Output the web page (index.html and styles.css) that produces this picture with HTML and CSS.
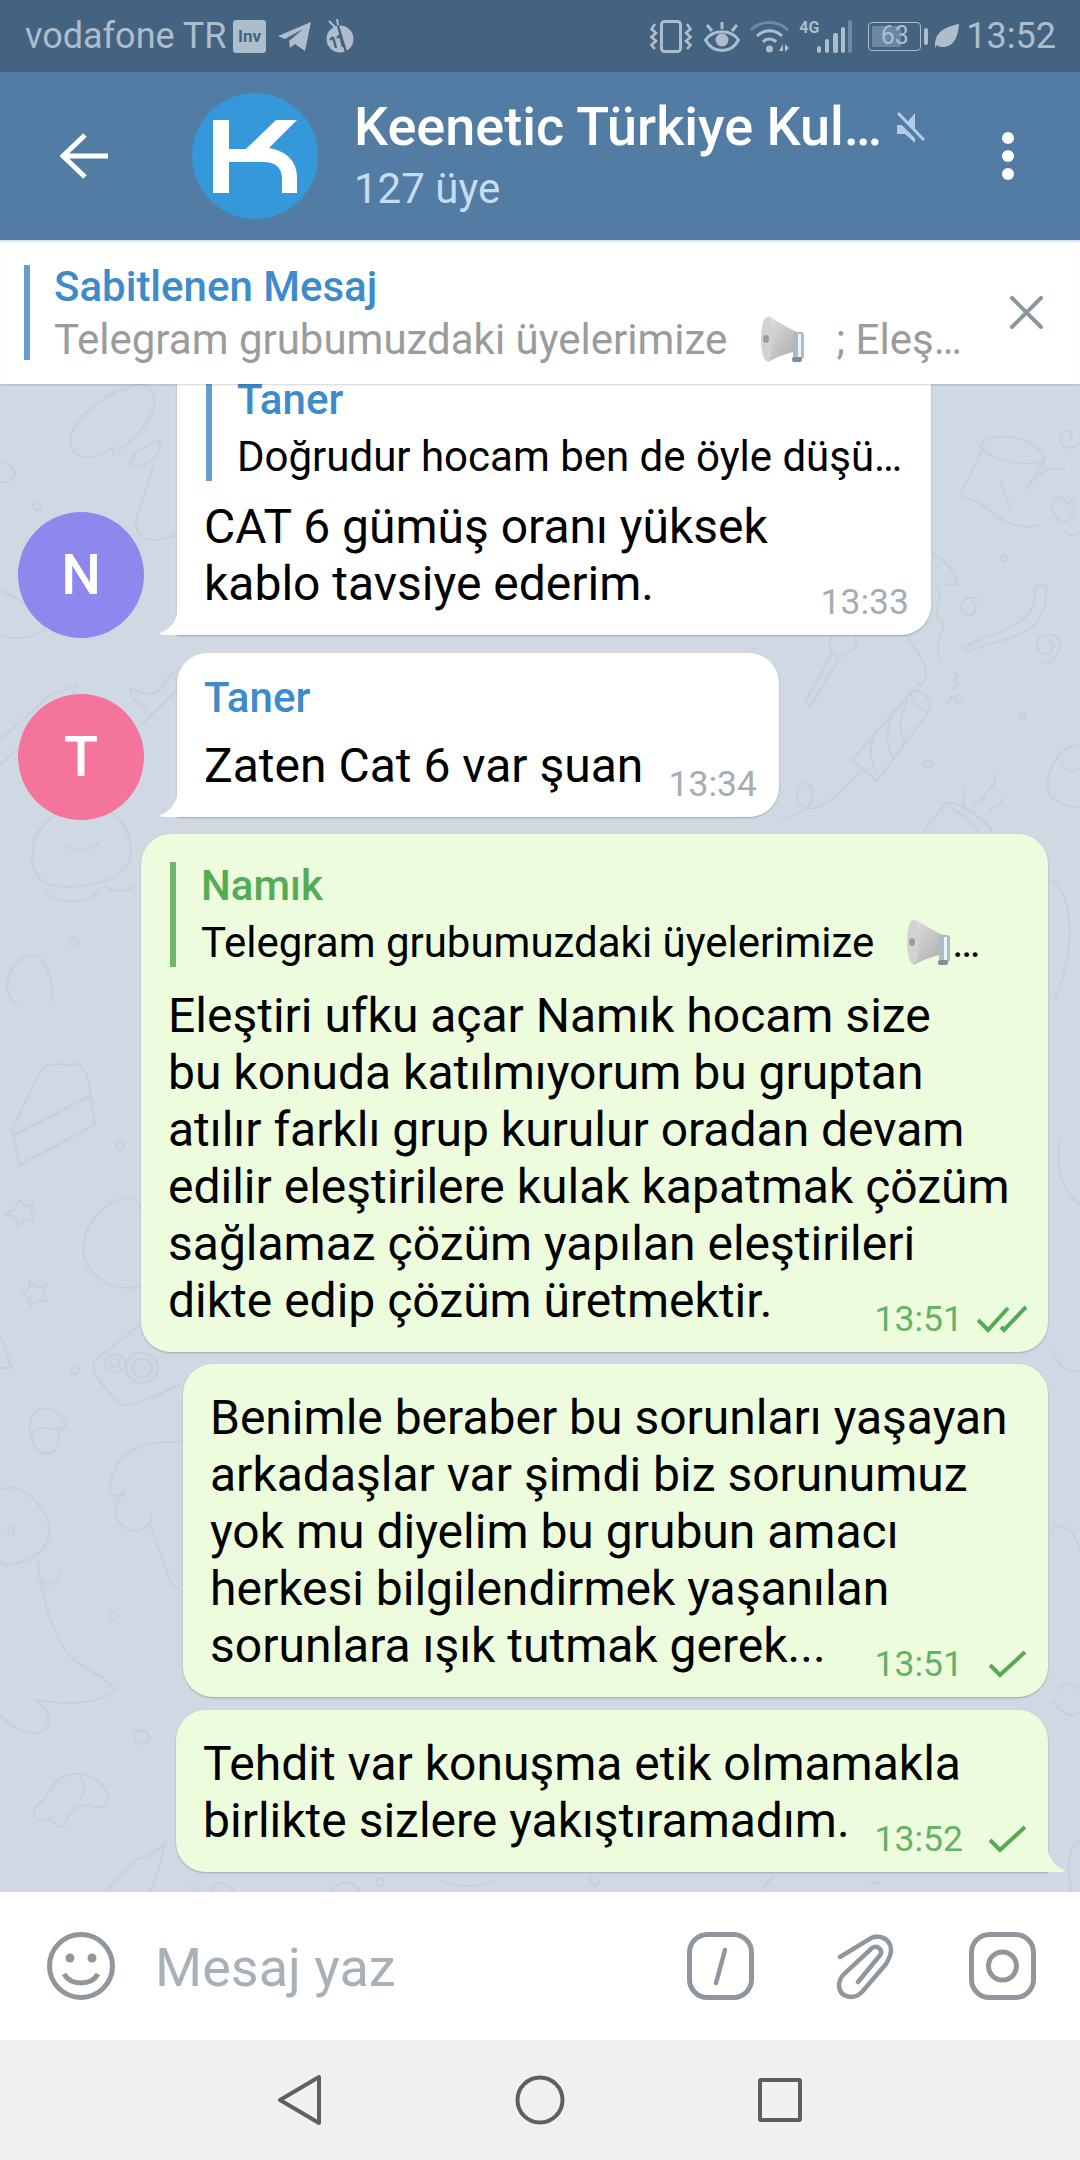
FILE: index.html
```html
<!DOCTYPE html>
<html lang="tr">
<head>
    <meta charset="UTF-8">
    <meta name="viewport" content="width=device-width, initial-scale=1.0">
    <title>Keenetic Türkiye Kulübü</title>
    <link rel="stylesheet" href="styles.css">
</head>
<body>
    <svg class="defs" width="0" height="0">
        <defs>
            <linearGradient id="horn" x1="0" y1="0" x2="1" y2="1">
                <stop offset="0" stop-color="#e4e4e4"/>
                <stop offset="1" stop-color="#a9a9a9"/>
            </linearGradient>
            <symbol id="megaphone" viewBox="0 0 46 48">
                <path d="M9 1C18 7 30 14 39 18L38 36C28 38 16 42 8 47C2 42 0 10 9 1Z" fill="url(#horn)"/>
                <ellipse cx="7" cy="24" rx="6" ry="22" fill="#d2d2d2"/>
                <ellipse cx="6" cy="24" rx="3" ry="4" fill="#9a9a9a"/>
                <rect x="33" y="17" width="11" height="27" rx="3" fill="#a9bccb"/>
                <rect x="38" y="19" width="3" height="23" fill="#eef3f6"/>
                <rect x="32" y="42" width="10" height="5" rx="2" fill="#7f8f9c"/>
            </symbol>
        </defs>
    </svg>

    <div class="statusbar">
        <span class="carrier">vodafone TR</span>
        <span class="inv-badge">Inv</span>
        <svg class="st-plane" viewBox="0 0 33 29"><path d="M33 0L27 29L17 22L12 26L11 19L25 7L7 17L0 14Z" fill="#adbdcb"/></svg>
        <svg class="st-bug" viewBox="0 0 28 34">
            <circle cx="14" cy="20" r="13.5" fill="#adbdcb"/>
            <path d="M9 8L3 2M12 6L11 0" stroke="#adbdcb" stroke-width="2" fill="none"/>
            <path d="M12 7L20 33M7 18L10 29M14 16L17 28M7 18L4 21M14 16L11 19" stroke="#446380" stroke-width="2.4" fill="none"/>
        </svg>
        <div class="st-right">
            <svg class="st-vibrate" viewBox="0 0 42 33" fill="none" stroke="#adbdcb" stroke-width="3">
                <rect x="11.500" y="1.500" width="19" height="30" rx="3"/>
                <path d="M5 4L1.500 9L6 13L1.500 17L6 21L1.500 25L5 29M37 4L40.500 9L36 13L40.500 17L36 21L40.500 25L37 29" stroke-width="2.600"/>
            </svg>
            <svg class="st-eye" viewBox="0 0 36 31" fill="none" stroke="#adbdcb" stroke-width="3">
                <path d="M1.500 19C9 8 27 8 34.500 19C27 33 9 33 1.500 19Z"/>
                <circle cx="18" cy="19" r="6.500" fill="#adbdcb" stroke="none"/>
                <path d="M18 1V8M3 4L8 10M33 4L28 10"/>
            </svg>
            <svg class="st-wifi" viewBox="0 0 39 33" fill="none" stroke-width="3">
                <path d="M1 10C11 0 28 0 38 10" stroke="#6f8aa2"/>
                <path d="M7 16C14 9 25 9 32 16M13 22C16 18 23 18 26 22" stroke="#adbdcb"/>
                <circle cx="19.500" cy="29" r="3.500" fill="#adbdcb"/>
                <path d="M29 31L33 24V31ZM35 24L39 28L35 32Z" fill="#adbdcb"/>
            </svg>
            <div class="st-signal">
                <span class="st-4g">4G</span>
                <svg viewBox="0 0 35 33">
                    <rect x="0" y="26" width="4" height="7" rx="2" fill="#adbdcb"/>
                    <rect x="8" y="19" width="4" height="14" rx="2" fill="#adbdcb"/>
                    <rect x="16" y="13" width="5" height="20" rx="2" fill="#adbdcb"/>
                    <rect x="24" y="7" width="4" height="26" rx="2" fill="#adbdcb"/>
                    <rect x="31" y="0" width="4" height="33" rx="2" fill="#6f8aa2"/>
                </svg>
            </div>
            <div class="st-battery">
                <div class="st-battery-body"><span class="st-battery-fill"></span><span class="st-battery-num">63</span></div>
                <span class="st-battery-nub"></span>
            </div>
            <svg class="st-leaf" viewBox="0 0 24 24"><path d="M24 0C23 14 18 24 6 23C5 23 3 22 2 21L0 24L0 21C0 8 10 3 24 0Z" fill="#adbdcb"/></svg>
            <span class="st-time">13:52</span>
        </div>
    </div>

    <header class="topbar">
        <svg class="back" viewBox="0 0 48 46" fill="none" stroke="#fff" stroke-width="5">
            <path d="M48 23H3M25 2L3 23L25 44"/>
        </svg>
        <div class="group-avatar">
            <svg viewBox="0 0 84 73"><path d="M0 0H16V29H33L63 0H84L56 28C74 31 84 42 84 57V73H69V59C69 47 62 42 50 42H16V73H0Z" fill="#fff"/></svg>
        </div>
        <div class="group-info">
            <div class="group-name">Keenetic Türkiye Kul…</div>
            <div class="group-members">127 üye</div>
        </div>
        <svg class="mute" viewBox="0 0 28 32">
            <path d="M0 13H8L18 1V31L8 22H0Z" fill="#b2cde5"/>
            <path d="M0 4L26 30" stroke="#527ca3" stroke-width="6"/>
            <path d="M1 1L27 28" stroke="#b2cde5" stroke-width="3"/>
        </svg>
        <div class="dots"><span></span><span></span><span></span></div>
    </header>

    <div class="pinned">
        <div class="pinned-text">
            <div class="pinned-title">Sabitlenen Mesaj</div>
            <div class="pinned-msg">Telegram grubumuzdaki üyelerimize<svg class="emoji pin-emoji"><use href="#megaphone"/></svg>; Eleş…</div>
        </div>
        <svg class="pinned-close" viewBox="0 0 33 33" stroke="#8a979e" stroke-width="4" stroke-linecap="round">
            <path d="M2 2L31 31M31 2L2 31"/>
        </svg>
    </div>

    <main class="chat">
        <svg class="doodles" viewBox="0 384 1080 1508" fill="none" stroke="#c6d0db" stroke-width="2">
            <!-- sol kolon -->
            <path d="M70 440C75 415 110 390 140 384C158 385 158 410 145 425C135 440 118 450 113 456L113 447C100 458 80 462 72 450Z"/>
            <path d="M0 462C10 462 16 470 14 476C10 483 5 482 0 482"/>
            <path d="M130 462C135 450 150 443 160 440C162 455 145 470 130 465ZM153 467L136 520C135 540 150 545 176 535"/>
            <circle cx="37" cy="506" r="4"/>
            <path d="M0 590C20 600 45 615 45 630C30 640 10 640 0 635"/>
            <path d="M0 740L50 695L77 685L70 700L0 765"/>
            <path d="M130 688C145 695 155 695 160 690C165 680 170 675 177 670M130 688C128 700 145 705 148 712M140 726L177 690"/>
            <path d="M33 850C35 825 60 805 85 805C115 805 135 830 130 860C120 885 75 890 50 885C35 880 30 865 33 850Z"/>
            <path d="M65 845C72 852 88 852 100 842M45 890C50 905 90 905 100 890M105 885C115 895 130 890 135 885"/>
            <circle cx="74" cy="942" r="4"/>
            <path d="M7 985C10 960 30 950 40 958C50 970 55 985 50 1004M7 985C8 995 12 1004 18 1004"/>
            <path d="M12 1130L40 1072C50 1060 60 1065 70 1065C80 1060 88 1070 90 1092L95 1125L20 1165ZM14 1135L92 1095"/>
            <circle cx="120" cy="1145" r="4"/>
            <path d="M20 1200L26 1207L33 1204L31 1213L34 1220L25 1219L18 1226L16 1217L5 1214L14 1209Z"/>
            <path d="M30 1281L37 1288L47 1284L43 1293L47 1301L37 1300L31 1306L28 1297L22 1293L29 1289Z"/>
            <path d="M83 1250C83 1225 105 1198 130 1198C138 1200 141 1205 140 1210M83 1250C85 1275 110 1292 140 1287"/>
            <path d="M95 1360C90 1368 97 1378 103 1385L118 1403C125 1408 135 1405 180 1385M95 1360L140 1325"/>
            <ellipse cx="142" cy="1368" rx="16" ry="15"/><ellipse cx="142" cy="1368" rx="10" ry="9"/>
            <ellipse cx="115" cy="1363" rx="10" ry="9"/><ellipse cx="115" cy="1363" rx="5" ry="4"/>
            <circle cx="75" cy="1370" r="4"/>
            <path d="M0 1336C5 1345 8 1360 12 1368H0"/>
            <path d="M30 1435C25 1410 50 1395 66 1425C62 1432 50 1428 45 1428C35 1428 30 1432 30 1435Z"/>
            <path d="M32 1432C30 1450 42 1456 52 1453C60 1448 60 1438 58 1428"/>
            <path d="M0 1490C15 1480 45 1500 50 1530C48 1550 35 1560 10 1565C0 1565 0 1560 0 1560"/>
            <path d="M38 1560C42 1610 60 1650 75 1660C85 1670 105 1675 115 1690C100 1705 65 1705 35 1700C50 1710 55 1725 40 1733C20 1735 10 1725 0 1715"/>
            <path d="M40 1580C50 1590 60 1580 60 1570"/>
            <ellipse cx="11" cy="1530" rx="3" ry="5"/>
            <path d="M115 1470C120 1450 150 1440 180 1442M115 1470C105 1490 110 1500 125 1495M125 1490C105 1510 120 1535 140 1530C150 1525 155 1520 150 1515M150 1525L172 1585L180 1590"/>
            <circle cx="113" cy="1616" r="4"/>
            <circle cx="142" cy="1737" r="7"/>
            <path d="M50 1790C60 1770 95 1765 108 1795C108 1808 100 1810 88 1805C75 1805 68 1815 65 1825C60 1830 55 1825 50 1818C40 1825 30 1818 35 1808C40 1802 45 1800 50 1790Z"/>
            <path d="M80 1775C85 1785 85 1795 80 1800"/>
            <path d="M105 1892L135 1860L150 1855L165 1843L160 1865L155 1880L150 1892"/>
            <!-- sag kolon -->
            <path d="M980 445C990 430 1035 435 1045 458C1040 468 990 465 980 445Z"/>
            <path d="M982 450L970 475C962 490 960 493 962 497C975 500 985 505 995 515C1010 525 1025 530 1040 525"/>
            <path d="M1045 460L1025 490C1040 470 1050 465 1065 470M1000 480C1005 495 1010 505 1010 510"/>
            <path d="M1052 505C1058 490 1065 500 1068 505C1072 495 1078 500 1072 515C1068 525 1055 525 1052 505Z"/>
            <path d="M1065 530C1070 540 1080 535 1080 530"/>
            <circle cx="1004" cy="558" r="3"/>
            <path d="M1068 441C1074 436 1072 430 1066 431C1060 432 1058 440 1063 446C1070 450 1076 447 1080 442"/>
            <path d="M970 602C976 602 978 610 973 614C966 617 960 610 962 604C966 596 975 596 980 602"/>
            <path d="M1048 640C1054 642 1054 652 1048 654C1040 656 1035 648 1038 640C1042 632 1055 632 1060 642C1062 655 1050 665 1040 662"/>
            <path d="M1035 586C1040 625 1000 630 963 647L968 652C1005 635 1050 640 1046 585Z"/>
            <path d="M937 586C945 600 930 610 941 620C950 630 930 640 941 660"/>
            <path d="M931 553C945 560 955 570 958 585L945 584"/>
            <path d="M832 654L805 702L811 706L838 660M832 654C825 640 835 630 845 632C858 632 860 645 852 650C845 655 838 660 832 654Z"/>
            <path d="M907 637C915 650 930 665 925 680C920 690 915 680 915 680"/>
            <path d="M913 690C925 690 932 702 930 710C925 715 905 700 913 690Z"/>
            <path d="M913 690L852 760L877 781L930 710M897 708C885 725 885 745 893 758M882 725C868 740 868 755 876 772M908 700C900 715 898 730 905 742"/>
            <path d="M860 770C840 800 800 825 797 795C800 775 815 780 812 800C805 815 790 815 780 820"/>
            <path d="M953 672C960 675 958 680 953 680C960 683 958 690 952 688M945 705L953 696"/>
            <circle cx="959" cy="699" r="4"/><circle cx="1023" cy="717" r="3"/><circle cx="928" cy="764" r="4"/>
            <path d="M1080 745C1060 745 1045 770 1048 790C1050 800 1060 805 1080 808M1062 765C1068 775 1075 772 1080 768"/>
            <path d="M963 787C968 795 960 800 965 808M993 774C1000 785 985 790 985 795C982 802 978 802 973 804M1003 797C998 810 992 805 987 814"/>
            <path d="M923 832L947 802C965 805 985 820 993 832M950 808C965 815 975 825 978 832"/>
            <path d="M1052 880C1075 900 1075 950 1055 1000M1060 1140C1055 1170 1062 1190 1080 1205"/>
            <path d="M1052 1350C1062 1372 1070 1375 1080 1370M1052 1530C1060 1520 1075 1530 1080 1550"/>
            <path d="M1052 1700C1060 1712 1072 1720 1080 1712M1058 1690C1066 1680 1074 1684 1080 1690"/>
            <path d="M1080 1840C1068 1845 1066 1870 1072 1892"/>
            <!-- alt -->
            <path d="M210 1892C215 1880 225 1880 235 1892M190 1885L200 1892M330 1892C340 1880 352 1878 360 1892"/>
            <circle cx="380" cy="1882" r="4"/>
            <path d="M440 1880C455 1888 480 1888 495 1880M590 1876C590 1888 600 1890 600 1876M760 1890L775 1875M870 1880C875 1885 880 1885 880 1878"/>
        </svg>

        <div class="row">
            <div class="avatar avatar-n">N</div>
            <div class="bubble in bubble-cat">
                <div class="reply">
                    <div class="reply-name">Taner</div>
                    <div class="reply-text">Doğrudur hocam ben de öyle düşü…</div>
                </div>
                <div class="text">CAT 6 gümüş oranı yüksek<br>kablo tavsiye ederim.</div>
                <div class="meta">13:33</div>
            </div>
        </div>

        <div class="row row-taner">
            <div class="avatar avatar-t">T</div>
            <div class="bubble in bubble-zaten">
                <div class="sender">Taner</div>
                <div class="text">Zaten Cat 6 var şuan</div>
                <div class="meta">13:34</div>
            </div>
        </div>

        <div class="bubble out bubble-elestiri">
            <div class="reply">
                <div class="reply-name">Namık</div>
                <div class="reply-text">Telegram grubumuzdaki üyelerimize<svg class="emoji reply-emoji"><use href="#megaphone"/></svg>…</div>
            </div>
            <div class="text">Eleştiri ufku açar Namık hocam size<br>bu konuda katılmıyorum bu gruptan<br>atılır farklı grup kurulur oradan devam<br>edilir eleştirilere kulak kapatmak çözüm<br>sağlamaz çözüm yapılan eleştirileri<br>dikte edip çözüm üretmektir.</div>
            <div class="meta">13:51
                <svg class="tick" viewBox="0 0 50 28" fill="none" stroke="#56a957" stroke-width="4"><path d="M1 15L11 25L31 3M24 22L27 25L49 2"/></svg>
            </div>
        </div>

        <div class="bubble out bubble-benimle">
            <div class="text">Benimle beraber bu sorunları yaşayan<br>arkadaşlar var şimdi biz sorunumuz<br>yok mu diyelim bu grubun amacı<br>herkesi bilgilendirmek yaşanılan<br>sorunlara ışık tutmak gerek...</div>
            <div class="meta">13:51
                <svg class="tick" viewBox="0 0 50 28" fill="none" stroke="#56a957" stroke-width="4"><path d="M13 15L23 25L48 2"/></svg>
            </div>
        </div>

        <div class="bubble out tail bubble-tehdit">
            <div class="text">Tehdit var konuşma etik olmamakla<br>birlikte sizlere yakıştıramadım.</div>
            <div class="meta">13:52
                <svg class="tick" viewBox="0 0 50 28" fill="none" stroke="#56a957" stroke-width="4"><path d="M13 15L23 25L48 2"/></svg>
            </div>
        </div>
    </main>

    <div class="composer">
        <svg class="ic-smile" viewBox="0 0 68 70" fill="none" stroke="#8f979c" stroke-width="5">
            <circle cx="34" cy="35" r="31.500"/>
            <circle cx="23" cy="27" r="4.500" fill="#8f979c" stroke="none"/>
            <circle cx="45" cy="27" r="4.500" fill="#8f979c" stroke="none"/>
            <path d="M17 43C24 55 44 55 51 43" stroke-width="5"/>
        </svg>
        <div class="placeholder">Mesaj yaz</div>
        <svg class="ic-box" viewBox="0 0 67 68" fill="none" stroke="#8f979c" stroke-width="5">
            <rect x="2.500" y="2.500" width="62" height="63" rx="18"/>
            <path d="M38 18L29 51" stroke-width="4.500" stroke-linecap="round"/>
        </svg>
        <svg class="ic-clip" viewBox="0 0 58 68" fill="none" stroke="#8f979c" stroke-width="4.500" stroke-linecap="round">
            <path d="M4 25L32 8C42 0 55 7 55 18C55 24 52 28 50 32L26 60C18 68 4 66 3 54C3 49 5 45 8 42L36 16C40 13 46 16 45 22L22 50"/>
        </svg>
        <svg class="ic-box ic-cam" viewBox="0 0 67 68" fill="none" stroke="#8f979c" stroke-width="5">
            <rect x="2.500" y="2.500" width="62" height="63" rx="18"/>
            <circle cx="33.500" cy="34" r="14"/>
        </svg>
    </div>

    <nav class="navbar">
        <svg viewBox="0 0 44 50" class="nav-back" fill="none" stroke="#5f5f5f" stroke-width="4" stroke-linejoin="round"><path d="M41 2V48L2 25Z"/></svg>
        <svg viewBox="0 0 50 50" class="nav-home" fill="none" stroke="#5f5f5f" stroke-width="4"><circle cx="25" cy="25" r="22.500"/></svg>
        <svg viewBox="0 0 44 44" class="nav-recent" fill="none" stroke="#5f5f5f" stroke-width="4" stroke-linejoin="round"><rect x="2" y="2" width="40" height="40" rx="1"/></svg>
    </nav>
</body>
</html>
```

FILE: styles.css
```css
:root {
    --status: #446380;
    --header: #527ca3;
    --status-ic: #adbdcb;
    --blue: #3e8bcc;
    --blue-bar: #659fd2;
    --green: #55ac57;
    --green-bar: #6fb56f;
    --green-bg: #ecfcdc;
    --chat-bg: #d0d9e3;
    --meta-grey: #a4adb4;
}
* {
    box-sizing: border-box;
}
body {
    margin: 0;
    width: 1080px;
    height: 2160px;
    overflow: hidden;
    font-family: Roboto, "Noto Sans", sans-serif;
    display: flex;
    flex-direction: column;
}
.defs {
    position: absolute;
}

/* status bar */
.statusbar {
    height: 72px;
    flex: none;
    background: var(--status);
    display: flex;
    align-items: center;
    padding: 0 24px 0 25px;
    color: var(--status-ic);
}
.carrier {
    font-size: 36px;
    width: 208px;
    white-space: nowrap;
}
.inv-badge {
    width: 33px;
    height: 33px;
    border-radius: 3px;
    background: var(--status-ic);
    color: var(--status);
    font-size: 17px;
    font-weight: 700;
    text-align: center;
    line-height: 33px;
}
.st-plane {
    width: 33px;
    height: 29px;
    margin-left: 12px;
}
.st-bug {
    width: 28px;
    height: 34px;
    margin-left: 15px;
}
.st-right {
    margin-left: auto;
    display: flex;
    align-items: center;
}
.st-vibrate {
    width: 42px;
    height: 33px;
}
.st-eye {
    width: 36px;
    height: 31px;
    margin-left: 12px;
}
.st-wifi {
    width: 39px;
    height: 33px;
    margin-left: 10px;
}
.st-signal {
    display: flex;
    width: 53px;
    height: 33px;
    margin-left: 10px;
}
.st-4g {
    width: 18px;
    font-size: 16px;
    font-weight: 700;
    line-height: 15px;
}
.st-signal svg {
    width: 35px;
    height: 33px;
}
.st-battery {
    display: flex;
    align-items: center;
    margin-left: 16px;
}
.st-battery-body {
    position: relative;
    width: 53px;
    height: 29px;
    border: 1.5px solid var(--status-ic);
    border-radius: 4px;
    padding: 3px;
}
.st-battery-fill {
    display: block;
    width: 63%;
    height: 100%;
    background: #6b87a1;
    border-radius: 1px;
}
.st-battery-num {
    position: absolute;
    left: 0;
    right: 0;
    top: 0;
    text-align: center;
    font-size: 25px;
    line-height: 26px;
}
.st-battery-nub {
    width: 4px;
    height: 17px;
    margin-left: 3px;
    background: var(--status-ic);
    border-radius: 2px;
}
.st-leaf {
    width: 24px;
    height: 24px;
    margin-left: 7px;
}
.st-time {
    font-size: 36px;
    margin-left: 7px;
}

/* header */
.topbar {
    height: 168px;
    flex: none;
    background: var(--header);
    display: flex;
    align-items: center;
    padding-left: 60px;
    position: relative;
}
.back {
    width: 48px;
    height: 46px;
    flex: none;
}
.group-avatar {
    width: 126px;
    height: 126px;
    margin-left: 84px;
    border-radius: 50%;
    background: #3498db;
    display: flex;
    align-items: center;
    justify-content: center;
    flex: none;
}
.group-avatar svg {
    width: 84px;
    height: 73px;
}
.group-info {
    margin-left: 36px;
    width: 543px;
}
.group-name {
    font-size: 54px;
    font-weight: 500;
    line-height: 66px;
    color: #fff;
    white-space: nowrap;
}
.group-members {
    font-size: 42px;
    line-height: 58px;
    color: #c6dcf0;
}
.mute {
    width: 28px;
    height: 32px;
    margin-bottom: 56px;
    flex: none;
}
.dots {
    margin-left: 77px;
    display: flex;
    flex-direction: column;
    gap: 6px;
}
.dots span {
    width: 12px;
    height: 12px;
    border-radius: 50%;
    background: #fff;
}

/* sabitlenen mesaj */
.pinned {
    height: 144px;
    flex: none;
    background: #fff;
    display: flex;
    align-items: center;
    padding-left: 24px;
    position: relative;
    z-index: 2;
    box-shadow: 0 1px 2px rgba(0, 0, 0, 0.18), inset 0 3px 3px -2px rgba(82, 124, 163, 0.35);
}
.pinned-text {
    border-left: 6px solid var(--blue-bar);
    padding-left: 24px;
    height: 95px;
    width: 986px;
}
.pinned-title {
    font-size: 42px;
    font-weight: 500;
    line-height: 50px;
    margin-top: -3px;
    color: var(--blue);
}
.pinned-msg {
    font-size: 42px;
    line-height: 56px;
    color: #9b9b9b;
    white-space: nowrap;
}
.emoji {
    vertical-align: -9px;
}
.pin-emoji {
    width: 46px;
    height: 48px;
    margin: 0 30px 0 33px;
}
.pinned-close {
    width: 33px;
    height: 33px;
}

/* sohbet */
.chat {
    height: 1508px;
    flex: none;
    background: var(--chat-bg);
    position: relative;
    overflow: hidden;
    display: flex;
    flex-direction: column;
    justify-content: flex-end;
    padding: 0 32px 20px 0;
}
.doodles {
    position: absolute;
    left: 0;
    top: 0;
    width: 1080px;
    height: 1508px;
}
.row {
    position: relative;
    display: flex;
    align-items: flex-end;
    padding-left: 18px;
    flex: none;
}
.row-taner {
    margin-top: 18px;
}
.avatar {
    width: 126px;
    height: 126px;
    margin-bottom: -3px;
    border-radius: 50%;
    color: #fff;
    font-size: 56px;
    font-weight: 500;
    display: flex;
    align-items: center;
    justify-content: center;
    flex: none;
    position: relative;
}
.avatar-n {
    background: #8e87ee;
}
.avatar-t {
    background: #f4749c;
}
.bubble {
    position: relative;
    flex: none;
    border-radius: 30px;
    box-shadow: 0 1px 2px rgba(60, 80, 100, 0.35);
    padding: 28px 27px 23px;
    color: #000;
}
.bubble.in {
    margin-left: 33px;
    background: #fff;
    border-bottom-left-radius: 0;
}
.bubble.in::before {
    content: "";
    position: absolute;
    left: -17px;
    bottom: 0;
    width: 18px;
    height: 30px;
    background: #fff;
    clip-path: path("M18 0C18 16 10 25 0 28C0 29 1 30 3 30H18Z");
}
.bubble.out {
    align-self: flex-end;
    background: var(--green-bg);
}
.bubble.tail {
    border-bottom-right-radius: 0;
}
.bubble.tail::after {
    content: "";
    position: absolute;
    right: -17px;
    bottom: 0;
    width: 18px;
    height: 30px;
    background: var(--green-bg);
    clip-path: path("M0 0C0 16 8 25 18 28C18 29 17 30 15 30H0Z");
}
.bubble-cat {
    width: 754px;
}
.bubble-zaten {
    width: 602px;
    padding-top: 20px;
}
.bubble-elestiri {
    width: 907px;
    margin-top: 17px;
}
.bubble-benimle {
    width: 865px;
    margin-top: 12px;
    padding-top: 25px;
}
.bubble-tehdit {
    width: 872px;
    margin-top: 13px;
    padding-top: 25px;
}
.text {
    font-size: 48px;
    line-height: 57px;
    white-space: nowrap;
}
.sender {
    font-size: 42px;
    font-weight: 500;
    line-height: 50px;
    color: var(--blue);
    margin-bottom: 14px;
}
.reply {
    margin: 0 0 20px 2px;
    padding-left: 25px;
    border-left: 6px solid var(--blue-bar);
    height: 105px;
}
.reply-name {
    font-size: 42px;
    font-weight: 500;
    line-height: 48px;
    color: var(--blue);
}
.reply-text {
    font-size: 42px;
    line-height: 66px;
    white-space: nowrap;
}
.reply-emoji {
    width: 46px;
    height: 48px;
    margin-left: 32px;
}
.bubble-cat .reply {
    margin-bottom: 17px;
}
.bubble.out .reply {
    border-left-color: var(--green-bar);
}
.bubble.out .reply-name {
    color: var(--green);
}
.meta {
    position: absolute;
    right: 22px;
    bottom: 14px;
    display: flex;
    align-items: center;
    gap: 14px;
    height: 38px;
    font-size: 35.500px;
    color: var(--meta-grey);
}
.bubble.out .meta {
    color: #65b266;
    right: 21px;
}
.tick {
    width: 50px;
    height: 28px;
}

/* yazma alani */
.composer {
    height: 148px;
    flex: none;
    background: #fff;
    display: flex;
    align-items: center;
    padding-left: 47px;
    position: relative;
}
.ic-smile {
    width: 68px;
    height: 70px;
}
.placeholder {
    margin-left: 40px;
    padding-top: 3px;
    font-size: 54px;
    color: #a9b1b8;
    width: 532px;
}
.ic-box {
    width: 67px;
    height: 68px;
}
.ic-clip {
    width: 58px;
    height: 68px;
    margin-left: 82px;
}
.ic-cam {
    margin-left: 75px;
}

/* android nav */
.navbar {
    height: 120px;
    flex: none;
    background: #f0f0f0;
    display: flex;
    align-items: center;
    padding-left: 278px;
}
.nav-back {
    width: 44px;
    height: 50px;
}
.nav-home {
    width: 50px;
    height: 50px;
    margin-left: 193px;
}
.nav-recent {
    width: 44px;
    height: 44px;
    margin-left: 193px;
}
```
